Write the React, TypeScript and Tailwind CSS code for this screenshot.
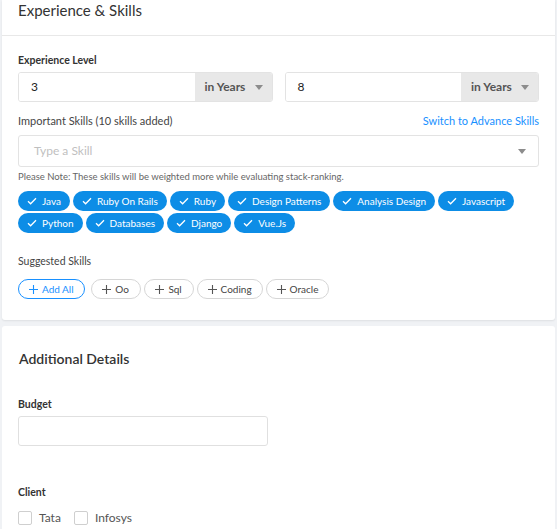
import React from 'react';

const selectedSkills = [
  'Java',
  'Ruby On Rails',
  'Ruby',
  'Design Patterns',
  'Analysis Design',
  'Javascript',
  'Python',
  'Databases',
  'Django',
  'Vue.Js',
];

const suggested = ['Oo', 'Sql', 'Coding', 'Oracle'];

const Caret = () => (
  <svg width="8" height="5" viewBox="0 0 8 5" className="fill-[#8c8c8c]">
    <path d="M0 0h8L4 5z" />
  </svg>
);

const Check = () => (
  <svg width="10" height="8" viewBox="0 0 10 8" fill="none" stroke="white" strokeWidth="1.3">
    <path d="M1 4.2l2.6 2.6L9 1.2" />
  </svg>
);

const Plus = ({ color }: { color: string }) => (
  <svg width="9" height="9" viewBox="0 0 9 9" fill="none" stroke={color} strokeWidth="1.1">
    <path d="M4.5 0v9M0 4.5h9" />
  </svg>
);

const YearsInput = ({ value }: { value: string }) => (
  <div className="flex h-[30px] flex-1 overflow-hidden rounded-[3px] border border-[#e3e3e3]">
    <div className="flex flex-1 items-center bg-white pl-[12px] text-[12px] text-[#222]">{value}</div>
    <div className="flex w-[77px] items-center justify-between bg-[#e8e8e8] pl-[10px] pr-[9px] text-[12px] font-bold text-[#555]">
      <span>in Years</span>
      <Caret />
    </div>
  </div>
);

export default function App() {
  return (
    <div
      className="min-h-[529px] bg-[#f0f2f5] pl-[2px] pr-[2px] text-[#333]"
      style={{ fontFamily: 'Lato, "Noto Sans", sans-serif' }}
    >
      {/* Experience & Skills */}
      <div className="h-[320px] rounded-b-[3px] bg-white shadow-[0_1px_2px_rgba(0,0,0,0.08)]">
        <div className="h-[36px] border-b border-[#e8e8e8] pl-[16px] text-[15px] leading-[20px] text-[#333]">
          Experience &amp; Skills
        </div>
        <div className="px-[16px] pt-[16px]">
          <div className="text-[10.5px] font-bold leading-[16px] text-[#333]">Experience Level</div>
          <div className="mt-[4px] flex gap-[12px]">
            <YearsInput value="3" />
            <YearsInput value="8" />
          </div>

          <div className="mt-[11px] flex items-center justify-between text-[11px] leading-[16px]">
            <span className="text-[#444]">Important Skills (10 skills added)</span>
            <span className="text-[#1890ff]">Switch to Advance Skills</span>
          </div>
          <div className="mt-[6px] flex h-[32px] items-center justify-between rounded-[3px] border border-[#e3e3e3] pl-[15px] pr-[12px] text-[12px] text-[#bfbfbf]">
            <span>Type a Skill</span>
            <Caret />
          </div>
          <div className="mt-[3px] text-[9.5px] leading-[14px] text-[#666]">
            Please Note: These skills will be weighted more while evaluating stack-ranking.
          </div>
          <div className="mt-[7px] flex flex-wrap gap-x-[3px] gap-y-[2px]">
            {selectedSkills.map((s) => (
              <span
                key={s}
                className="flex h-[20px] items-center gap-[5px] rounded-full bg-[#0d8de6] px-[9px] text-[10px] text-white"
              >
                <Check />
                {s}
              </span>
            ))}
          </div>

          <div className="mt-[20px] text-[10.5px] leading-[16px] text-[#444]">Suggested Skills</div>
          <div className="mt-[10px] flex gap-[3px]">
            <span className="mr-[3px] flex h-[20px] items-center gap-[4px] rounded-full border border-[#1890ff] px-[10px] text-[10px] text-[#1890ff]">
              <Plus color="#1890ff" />
              Add All
            </span>
            {suggested.map((s) => (
              <span
                key={s}
                className="flex h-[20px] min-w-[50px] items-center justify-center gap-[4px] rounded-full border border-[#d6d6d6] px-[10px] text-[10px] text-[#444]"
              >
                <Plus color="#555" />
                {s}
              </span>
            ))}
          </div>
        </div>
      </div>

      {/* Additional Details */}
      <div className="mt-[6px] h-[203px] overflow-hidden rounded-t-[3px] bg-white">
        <div className="pl-[17px] pt-[23px] text-[14px] font-semibold leading-[20px] text-[#333]">Additional Details</div>
        <div className="px-[16px] pt-[27px]">
          <div className="text-[10.5px] font-bold leading-[16px] text-[#333]">Budget</div>
          <div className="mt-[4px] h-[30px] w-[250px] rounded-[3px] border border-[#e0e0e0]" />
          <div className="mt-[38px] text-[10.5px] font-bold leading-[16px] text-[#333]">Client</div>
          <div className="mt-[10px] flex items-center text-[12px] leading-[16px] text-[#555]">
            <span className="h-[14px] w-[14px] rounded-[2px] border border-[#cfcfcf]" />
            <span className="ml-[7px]">Tata</span>
            <span className="ml-[13px] h-[14px] w-[14px] rounded-[2px] border border-[#cfcfcf]" />
            <span className="ml-[7px]">Infosys</span>
          </div>
        </div>
      </div>
    </div>
  );
}
